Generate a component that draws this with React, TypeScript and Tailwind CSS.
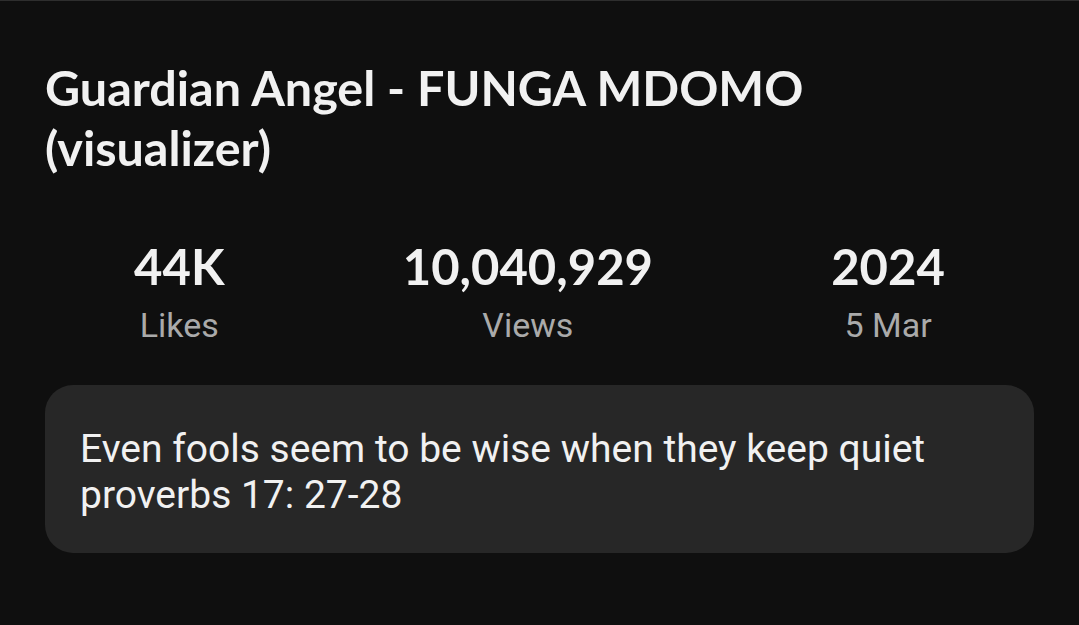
export default function App() {
  const stats = [
    { value: '44K', label: 'Likes' },
    { value: '10,040,929', label: 'Views' },
    { value: '2024', label: '5 Mar' },
  ];

  return (
    <div className="min-h-[625px] w-full bg-[#0f0f0f] border-t border-[#2e2e2e] px-[45px] pt-[56px] font-['Roboto',sans-serif]">
      {/* Title */}
      <h1 className="font-['Lato',sans-serif] font-bold text-[48.5px] leading-[60px] text-[#f1f1f1] pr-[200px]">
        Guardian Angel - FUNGA MDOMO (visualizer)
      </h1>

      {/* Stats */}
      <div className="mt-[61px] flex justify-around">
        {stats.map((s) => (
          <div key={s.label} className="flex flex-col items-center">
            <span className="font-['Lato',sans-serif] font-bold text-[49px] leading-[56px] text-[#f1f1f1]">
              {s.value}
            </span>
            <span className="mt-[11px] text-[34px] leading-[40px] text-[#aaaaaa]">{s.label}</span>
          </div>
        ))}
      </div>

      {/* Description */}
      <div className="mt-[40px] rounded-[28px] bg-[#272727] px-[35px] pt-[41px] pb-[35px]">
        <p className="text-[39px] leading-[46px] text-[#f1f1f1]">
          Even fools seem to be wise when they keep quiet
          <br />
          proverbs 17: 27-28
        </p>
      </div>
    </div>
  );
}
